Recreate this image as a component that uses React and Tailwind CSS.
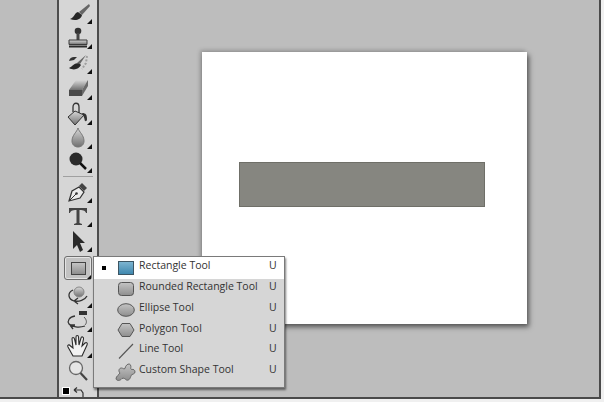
const menuItems = [
  { label: "Rectangle Tool", icon: <RectIcon />, active: true },
  { label: "Rounded Rectangle Tool", icon: <RoundedIcon /> },
  { label: "Ellipse Tool", icon: <EllipseIcon /> },
  { label: "Polygon Tool", icon: <PolygonIcon /> },
  { label: "Line Tool", icon: <LineIcon /> },
  { label: "Custom Shape Tool", icon: <CustomIcon /> },
];

function RectIcon() {
  return (
    <svg width="18" height="16" viewBox="0 0 18 16">
      <defs>
        <linearGradient id="blue" x1="0" y1="0" x2="0" y2="1">
          <stop offset="0" stopColor="#7fb6d2" />
          <stop offset="1" stopColor="#3d86ad" />
        </linearGradient>
      </defs>
      <rect x="1.5" y="1.5" width="15" height="13" fill="url(#blue)" stroke="#3c5563" />
    </svg>
  );
}

function RoundedIcon() {
  return (
    <svg width="18" height="16" viewBox="0 0 18 16">
      <rect x="1.5" y="1.5" width="15" height="13" rx="3" fill="url(#shape)" stroke="#555" />
    </svg>
  );
}

function EllipseIcon() {
  return (
    <svg width="18" height="16" viewBox="0 0 18 16">
      <ellipse cx="9" cy="8" rx="8.300" ry="6.300" fill="url(#shape)" stroke="#555" />
    </svg>
  );
}

function PolygonIcon() {
  return (
    <svg width="18" height="16" viewBox="0 0 18 16">
      <path d="M5 1.500H13L17 8L13 14.500H5L1 8Z" fill="url(#shape)" stroke="#555" />
    </svg>
  );
}

function LineIcon() {
  return (
    <svg width="18" height="16" viewBox="0 0 18 16">
      <path d="M2 15.500L16 1" fill="none" stroke="#555" strokeWidth="1.100" />
    </svg>
  );
}

function CustomIcon() {
  return (
    <svg width="21" height="20" viewBox="0 0 21 20">
      <path
        d="M1 17C1 14 4 13 5 11C3 9 4 6 6.500 6C8 6 8.500 7.500 10 6.500C10.500 3 14 0.500 15.500 3C16.500 5 15 6.500 16.500 7.500C18.500 7 20 8 20 10C20 12 17 12 16 13.500C15.500 16 14 19 11.500 18C10 17 9 15.500 7 16.500C5 19 2 19 1 17Z"
        fill="url(#shape)"
        stroke="#666"
      />
    </svg>
  );
}

const toolIcons = {
  brush: (
    <g transform="translate(3 2)">
      <path d="M20 1L10 9L13 12L21 3Z" fill="#666" />
      <path d="M9 9C5 10 6 14 1 16C6 18 12 17 13 12Z" fill="#262626" />
    </g>
  ),
  stamp: (
    <>
      <circle cx="12" cy="5" r="3.300" fill="#333" />
      <rect x="10.500" y="7" width="3" height="7" fill="#444" />
      <path d="M3 14H21V18.500H3Z" fill="url(#tool)" stroke="#3a3a3a" />
      <rect x="3" y="19.500" width="18" height="2" fill="#2b2b2b" />
    </>
  ),
  heal: (
    <g transform="translate(1 0)">
      <path d="M7 6C4.500 6 2.500 7.500 2 10L7 9L10 6Z" fill="#333" />
      <path d="M12 12C7 12 6 15 2 17C7 20 12 18 14 14Z" fill="#262626" />
      <path d="M19 4L10 12L13 13Z" fill="#666" />
      <path d="M20 5L19 12L15 18" fill="none" stroke="#a0a0a0" strokeWidth="2" strokeDasharray="2 1.500" />
    </g>
  ),
  eraser: (
    <>
      <path d="M10 4H22L16 14H3Z" fill="url(#tool)" />
      <path d="M3 14H16V20H3Z" fill="#4a4a4a" />
      <path d="M16 14L22 4V10L16 20Z" fill="#6a6a6a" />
    </>
  ),
  bucket: (
    <>
      <path d="M9 9L2 15L9 23L18 13Z" fill="url(#tool)" stroke="#333" />
      <path d="M7 10V5C7 0 13 0 13 5V11" fill="none" stroke="#333" strokeWidth="1.300" />
      <path d="M16 11C20 11 21 13 21 17C21 20 18.500 20 18.500 17L17.500 14Z" fill="#333" />
    </>
  ),
  drop: (
    <path d="M12 2C11 6 6 9 6 15C6 19 9 21 12 21C15 21 18 19 18 15C18 9 13 6 12 2Z" fill="url(#tool)" stroke="#777" />
  ),
  sponge: (
    <>
      <circle cx="10" cy="9" r="6.500" fill="#2a2a2a" />
      <path d="M14 13L20 19" stroke="#111" strokeWidth="2.500" />
    </>
  ),
  pen: (
    <>
      <path d="M3 21L6 11L13 7L18 12L14 18Z" fill="#ececec" stroke="#333" strokeWidth="1.200" />
      <path d="M3 21L10 14" stroke="#333" />
      <circle cx="10.500" cy="13.500" r="1.300" fill="#333" />
      <path d="M13 6L16 3L21 8L18 11Z" fill="#444" />
    </>
  ),
  type: (
    <path d="M3 4H21V9H20C19.500 7 18 6 13.500 6V19L16 20V21H8V20L10.500 19V6C6 6 4.500 7 4 9H3Z" fill="#444" />
  ),
  arrow: <path d="M7 2V20L11 16L14 23L17 21L14 14H19Z" fill="#2a2a2a" />,
  orbit: (
    <>
      <circle cx="13" cy="8" r="5" fill="url(#tool)" stroke="#888" />
      <path d="M7 6C1 9 2 15 8 17C13 18 19 16 21 12M8 17L12 14M8 17L12 20" fill="none" stroke="#333" strokeWidth="1.300" />
    </>
  ),
  camera: (
    <>
      <rect x="13" y="2" width="8" height="4" fill="#333" />
      <path d="M9 7C3 8 1 12 3 15C6 18 13 19 19 17M4 16L9 16M4 16L7 20" fill="none" stroke="#333" strokeWidth="1.300" />
      <path d="M18 8C21 11 21 14 19 16" fill="none" stroke="#555" />
    </>
  ),
  hand: (
    <path
      d="M7 22L2 13C1 11 3 10 4.500 12L7 14L6 5C6 3 8 3 8.500 5L10 11L10 3C10 1 12.500 1 12.500 3L13 11L15 4C15.500 2 18 3 17.500 5L16 12L19 9C20.500 8 22 9 21 11L16 22Z"
      fill="#f1f1f1"
      stroke="#2a2a2a"
      strokeWidth="1.100"
    />
  ),
  zoom: (
    <>
      <circle cx="10" cy="9" r="6.500" fill="#e6e6e6" stroke="#666" strokeWidth="1.300" />
      <path d="M14.500 14L21 21" stroke="#444" strokeWidth="2.200" />
    </>
  ),
};

const topTools = [
  { name: "brush", h: "h-[24px]" },
  { name: "stamp", h: "h-[25px]" },
  { name: "heal", h: "h-[25px]" },
  { name: "eraser", h: "h-[26px]" },
  { name: "bucket", h: "h-[25px]" },
  { name: "drop", h: "h-[24px]" },
  { name: "sponge", h: "h-[24px]" },
];

const midTools = [
  { name: "pen", h: "h-[24px]" },
  { name: "type", h: "h-[24px]" },
  { name: "arrow", h: "h-[25px]" },
];

const lowTools = [
  { name: "orbit", h: "h-[26px]" },
  { name: "camera", h: "h-[24px]" },
  { name: "hand", h: "h-[26px]" },
  { name: "zoom", h: "h-[24px]", bare: true },
];

function Tool({ name, h, bare }) {
  return (
    <div className={`relative flex w-full shrink-0 items-center justify-center ${h}`}>
      <svg width="24" height="24" viewBox="0 0 24 24">
        {toolIcons[name]}
      </svg>
      {!bare && <Corner />}
    </div>
  );
}

function Corner() {
  return (
    <svg className="absolute bottom-[1px] right-[5px]" width="5" height="5" viewBox="0 0 5 5">
      <path d="M5 0V5H0Z" fill="#111" />
    </svg>
  );
}

export default function App() {
  return (
    <div className="h-[402px] w-[604px] overflow-hidden bg-[#f0f0f0] font-['Open_Sans',sans-serif]">
      <div className="relative flex h-[399px] w-[601px] border-b-2 border-r-2 border-b-[#4a4a4a] border-r-[#4a4a4a] bg-[#bdbdbd]">
        <svg width="0" height="0" className="absolute">
          <defs>
            <linearGradient id="shape" x1="0" y1="0" x2="0" y2="1">
              <stop offset="0" stopColor="#c4c4c4" />
              <stop offset="1" stopColor="#8e8e8e" />
            </linearGradient>
            <linearGradient id="tool" x1="0" y1="0" x2="0" y2="1">
              <stop offset="0" stopColor="#d8d8d8" />
              <stop offset="1" stopColor="#707070" />
            </linearGradient>
          </defs>
        </svg>

        {/* left strip */}
        <div className="w-[57px] shrink-0" />

        {/* toolbox */}
        <div className="flex w-[42px] shrink-0 flex-col items-center overflow-hidden border-x-2 border-x-[#4d4d4d] bg-[#d6d6d6] pt-[1px]">
          {topTools.map((t) => (
            <Tool key={t.name} {...t} />
          ))}
          <div className="mb-[3px] mt-[2px] h-px w-[30px] shrink-0 bg-[#a0a0a0]" />
          {midTools.map((t) => (
            <Tool key={t.name} {...t} />
          ))}
          <div className="relative mb-[3px] mt-[3px] flex h-[24px] w-[28px] shrink-0 items-center justify-center rounded-[3px] border border-[#6e6e6e] bg-[#c2c2c2] shadow-[inset_0_0_0_1px_#e4e4e4]">
            <div className="h-[13px] w-[15px] border border-[#444] bg-gradient-to-b from-[#c4c4c4] to-[#8e8e8e]" />
            <svg className="absolute bottom-0 right-0" width="4" height="4" viewBox="0 0 4 4">
              <path d="M4 0V4H0Z" fill="#111" />
            </svg>
          </div>
          {lowTools.map((t) => (
            <Tool key={t.name} {...t} />
          ))}
          <div className="mt-[4px] flex h-[10px] w-full shrink-0 items-start gap-[3px] pl-[3px]">
            <div className="h-[8px] w-[8px] border border-white bg-black" />
            <svg width="12" height="12" viewBox="0 0 12 12">
              <path d="M2 3H8L10 6V11M1 3L4 0.500M1 3L4 5.500" fill="none" stroke="#333" strokeWidth="1.200" />
            </svg>
          </div>
        </div>

        {/* canvas */}
        <div className="flex-1 pl-[103px] pt-[52px]">
          <div className="h-[272px] w-[325px] bg-white pl-[37px] pt-[110px] shadow-[2px_3px_5px_rgba(0,0,0,0.55),-2px_-2px_4px_rgba(0,0,0,0.18)]">
            <div className="h-[45px] w-[246px] border border-[#6f6f68] bg-[#868680]" />
          </div>
        </div>

        {/* flyout menu */}
        <div className="absolute left-[93px] top-[256px] w-[192px] border border-[#7a7a7a] bg-[#d6d6d6] pb-[5px] shadow-[1px_2px_2px_rgba(0,0,0,0.5)]">
          {menuItems.map((item) => (
            <div
              key={item.label}
              className={`flex items-center text-[10.500px] text-[#333] ${item.active ? "h-[22px] bg-white" : "h-[20.600px]"}`}
            >
              <span className="w-[21px] shrink-0 pl-[8px]">
                {item.active && <span className="block h-[4px] w-[4px] bg-black" />}
              </span>
              <span className="flex w-[21px] shrink-0 items-center justify-center">{item.icon}</span>
              <span className="flex-1 -translate-y-[2px] whitespace-nowrap pl-[3px]">{item.label}</span>
              <span className="w-[15px] shrink-0 -translate-y-[2px]">U</span>
            </div>
          ))}
        </div>
      </div>
    </div>
  );
}
